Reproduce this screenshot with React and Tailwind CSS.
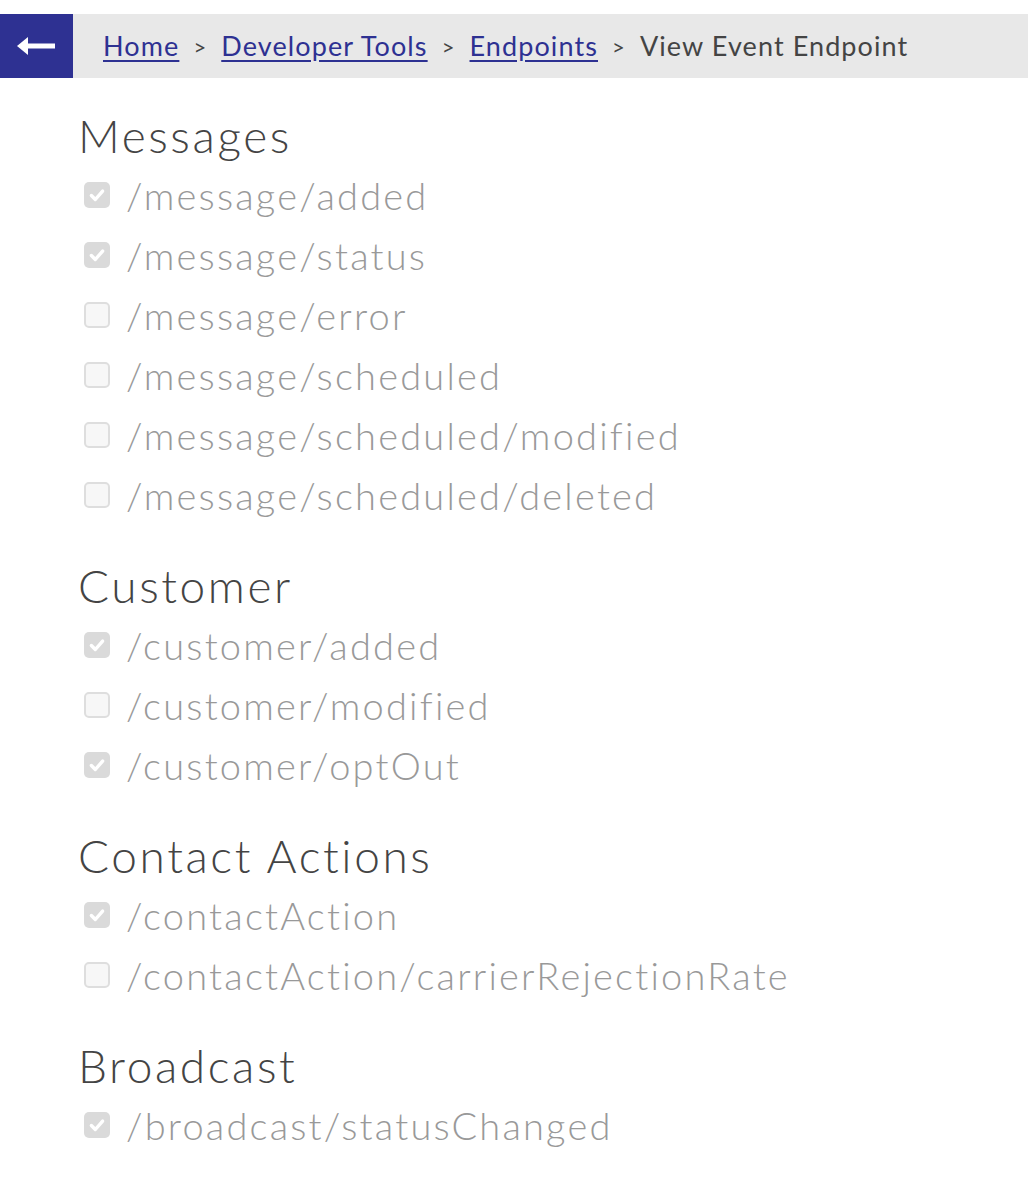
import React from "react";

const sections = [
  {
    title: "Messages",
    items: [
      ["/message/added", true],
      ["/message/status", true],
      ["/message/error", false],
      ["/message/scheduled", false],
      ["/message/scheduled/modified", false],
      ["/message/scheduled/deleted", false],
    ],
  },
  {
    title: "Customer",
    items: [
      ["/customer/added", true],
      ["/customer/modified", false],
      ["/customer/optOut", true],
    ],
  },
  {
    title: "Contact Actions",
    items: [
      ["/contactAction", true],
      ["/contactAction/carrierRejectionRate", false],
    ],
  },
  {
    title: "Broadcast",
    items: [["/broadcast/statusChanged", true]],
  },
];

function Box({ checked }) {
  if (checked) {
    return (
      <span className="flex h-[26px] w-[26px] shrink-0 items-center justify-center rounded-[5px] bg-[#dadada]">
        <svg width="18" height="18" viewBox="0 0 16 16">
          <path d="M3 8.5 L6.5 12 L13 4.5" fill="none" stroke="#fff" strokeWidth="3" strokeLinecap="round" strokeLinejoin="round" />
        </svg>
      </span>
    );
  }
  return <span className="h-[26px] w-[26px] shrink-0 rounded-[5px] border-2 border-[#dedede] bg-[#f7f7f7]" />;
}

export default function App() {
  return (
    <div className="min-h-[1180px] bg-white pt-[14px]" style={{ fontFamily: "Lato, 'Noto Sans', sans-serif" }}>
      <div className="flex h-[64px] items-stretch">
        <div className="flex w-[73px] shrink-0 items-center justify-center bg-[#2e3192]">
          <svg width="40" height="20" viewBox="0 0 40 20">
            <polygon points="0,10 11,1 11,19" fill="#fff" />
            <rect x="9" y="7.5" width="29" height="5" fill="#fff" />
          </svg>
        </div>
        <div className="flex flex-1 items-center gap-[14px] bg-[#e8e8e8] pl-[30px] text-[27px] tracking-[1.1px] text-[#444]">
          <a className="text-[#2e3192] underline underline-offset-[4px]">Home</a>
          <span className="text-[22px]">&gt;</span>
          <a className="text-[#2e3192] underline underline-offset-[4px]">Developer Tools</a>
          <span className="text-[22px]">&gt;</span>
          <a className="text-[#2e3192] underline underline-offset-[4px]">Endpoints</a>
          <span className="text-[22px]">&gt;</span>
          <span>View Event Endpoint</span>
        </div>
      </div>
      <div className="flex flex-col gap-[30px] pl-[78px] pt-[27px]">
        {sections.map((s) => (
          <div key={s.title} className="flex flex-col">
            <div className="flex h-[60px] items-center text-[46px] font-light tracking-[2.6px] text-[#444]">{s.title}</div>
            {s.items.map(([label, checked]) => (
              <div key={label} className="flex h-[60px] items-center gap-[16px] pl-[6px]">
                <Box checked={checked} />
                <span className="text-[38px] font-light tracking-[2.2px] text-[#999]">{label}</span>
              </div>
            ))}
          </div>
        ))}
      </div>
    </div>
  );
}
